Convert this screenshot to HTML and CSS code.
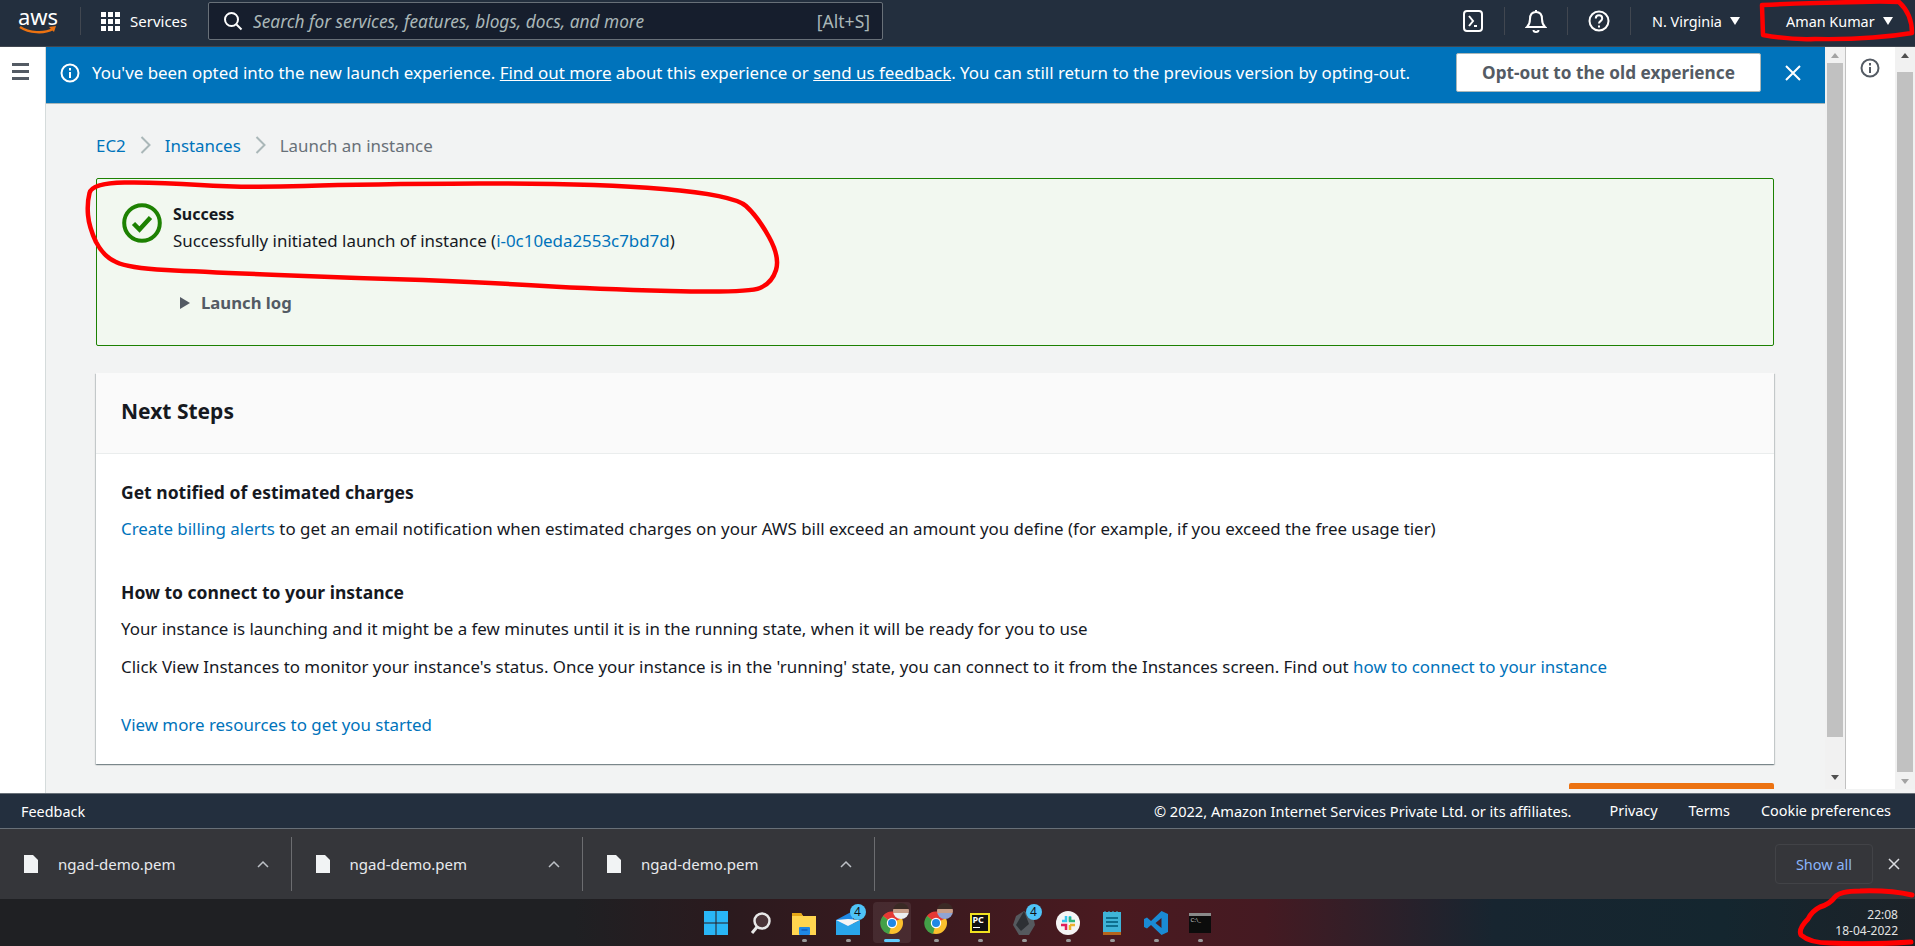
FILE: index.html
```html
<!DOCTYPE html>
<html lang="en">
<head>
<meta charset="UTF-8">
<meta name="viewport" content="width=device-width, initial-scale=1.0">
<title>Launch an instance | EC2</title>
<link rel="stylesheet" href="styles.css">
</head>
<body>

<header class="topbar">
  <div class="aws-logo">
    <span>aws</span>
    <svg width="40" height="10" viewBox="0 0 40 10"><path d="M2 1c9 6 24 7 33 2" fill="none" stroke="#ec7211" stroke-width="2.4"/><path d="M31 1l7-1-2 6z" fill="#ec7211"/></svg>
  </div>
  <div class="top-divider logo-divider"></div>
  <div class="services">
    <div class="grid-icon"><i></i><i></i><i></i><i></i><i></i><i></i><i></i><i></i><i></i></div>
    <span>Services</span>
  </div>
  <div class="search">
    <svg width="20" height="20" viewBox="0 0 20 20" fill="none" stroke="#fff" stroke-width="2"><circle cx="8.5" cy="8.5" r="6.5"/><path d="M13.5 13.5l5 5"/></svg>
    <span class="search-text">Search for services, features, blogs, docs, and more</span>
    <span class="search-key">[Alt+S]</span>
  </div>
  <div class="top-right">
    <div class="top-icon">
      <svg width="20" height="22" viewBox="0 0 20 22" fill="none" stroke="#fff" stroke-width="2"><rect x="1" y="1" width="18" height="20" rx="3"/><path d="M6 6l4 5-4 5M11 16h3"/></svg>
    </div>
    <div class="top-divider"></div>
    <div class="top-icon">
      <svg width="22" height="24" viewBox="0 0 22 24" fill="none" stroke="#fff" stroke-width="2"><path d="M2 18c3-3 3-5 3-8 0-4 2-7 6-7s6 3 6 7c0 3 0 5 3 8z"/><path d="M11 1v2M8.500 21a2.500 2 0 0 0 5 0"/></svg>
    </div>
    <div class="top-divider"></div>
    <div class="top-icon">
      <svg width="22" height="22" viewBox="0 0 22 22" fill="none" stroke="#fff" stroke-width="2"><circle cx="11" cy="11" r="9.500"/><path d="M7.800 8.500c0-4.200 6.400-4.200 6.400 0 0 2.600-3.200 2.600-3.200 5"/><path d="M11 15.500v2"/></svg>
    </div>
    <div class="top-divider"></div>
    <div class="top-menu region">N. Virginia <span class="arrow"></span></div>
    <div class="top-menu user">Aman Kumar <span class="arrow"></span></div>
  </div>
</header>

<div class="workspace">
  <aside class="side-left">
    <div class="hamburger"><i></i><i></i><i></i></div>
  </aside>

  <div class="center">
    <div class="banner">
      <svg class="banner-info" width="20" height="20" viewBox="0 0 20 20" fill="none" stroke="#fff" stroke-width="2"><circle cx="10" cy="10" r="8.500"/><path d="M10 9v6M10 5v2.400"/></svg>
      <p class="banner-text">You've been opted into the new launch experience. <a href="#">Find out more</a> about this experience or <a href="#">send us feedback</a>. You can still return to the previous version by opting-out.</p>
      <button class="opt-out">Opt-out to the old experience</button>
      <svg class="banner-close" width="18" height="18" viewBox="0 0 18 18" fill="none" stroke="#fff" stroke-width="2"><path d="M2 2l14 14M16 2L2 16"/></svg>
    </div>

    <main class="content">
      <nav class="crumbs">
        <a href="#">EC2</a>
        <svg width="11" height="18" viewBox="0 0 11 18" fill="none" stroke="#aab7b8" stroke-width="2"><path d="M1.500 1l8 8-8 8"/></svg>
        <a href="#">Instances</a>
        <svg width="11" height="18" viewBox="0 0 11 18" fill="none" stroke="#aab7b8" stroke-width="2"><path d="M1.500 1l8 8-8 8"/></svg>
        <span>Launch an instance</span>
      </nav>

      <section class="success-box">
        <div class="success-head">
          <svg width="40" height="40" viewBox="0 0 40 40" fill="none" stroke="#1d8102"><circle cx="20" cy="20" r="17.800" stroke-width="4"/><path d="M11.500 20.500l6 6 11-12" stroke-width="4.500"/></svg>
          <div>
            <div class="success-title">Success</div>
            <div class="success-msg">Successfully initiated launch of instance (<a href="#">i-0c10eda2553c7bd7d</a>)</div>
          </div>
        </div>
        <div class="launch-log"><span class="caret-right"></span>Launch log</div>
      </section>

      <section class="card">
        <h2 class="card-title">Next Steps</h2>
        <div class="card-body">
          <h3>Get notified of estimated charges</h3>
          <p><a href="#">Create billing alerts</a> to get an email notification when estimated charges on your AWS bill exceed an amount you define (for example, if you exceed the free usage tier)</p>
          <h3 class="second">How to connect to your instance</h3>
          <p>Your instance is launching and it might be a few minutes until it is in the running state, when it will be ready for you to use</p>
          <p>Click View Instances to monitor your instance's status. Once your instance is in the 'running' state, you can connect to it from the Instances screen. Find out <a href="#">how to connect to your instance</a></p>
          <p class="more"><a href="#">View more resources to get you started</a></p>
        </div>
      </section>

      <div class="orange-btn"></div>
    </main>
  </div>

  <div class="scrollbar">
    <span class="sb-up"></span>
    <div class="sb-thumb thumb-main"></div>
    <span class="sb-down"></span>
  </div>

  <aside class="side-right">
    <svg width="20" height="20" viewBox="0 0 20 20" fill="none" stroke="#545b64" stroke-width="2"><circle cx="10" cy="10" r="8.500"/><path d="M10 9v6M10 5v2.400"/></svg>
  </aside>

  <div class="scrollbar">
    <span class="sb-up dark"></span>
    <div class="sb-thumb thumb-side"></div>
    <span class="sb-down light"></span>
  </div>
</div>

<footer class="console-footer">
  <a href="#">Feedback</a>
  <div class="footer-right">
    <span class="copyright">© 2022, Amazon Internet Services Private Ltd. or its affiliates.</span>
    <a href="#">Privacy</a>
    <a href="#">Terms</a>
    <a href="#">Cookie preferences</a>
  </div>
</footer>

<div class="downloads">
  <div class="dl-item">
    <svg width="14" height="18" viewBox="0 0 14 18"><path d="M0 0h9l5 5v13H0z" fill="#f1f3f4"/></svg>
    <span>ngad-demo.pem</span>
    <svg class="dl-caret" width="12" height="8" viewBox="0 0 12 8" fill="none" stroke="#bdc1c6" stroke-width="1.500"><path d="M1 7l5-5 5 5"/></svg>
  </div>
  <div class="dl-item">
    <svg width="14" height="18" viewBox="0 0 14 18"><path d="M0 0h9l5 5v13H0z" fill="#f1f3f4"/></svg>
    <span>ngad-demo.pem</span>
    <svg class="dl-caret" width="12" height="8" viewBox="0 0 12 8" fill="none" stroke="#bdc1c6" stroke-width="1.500"><path d="M1 7l5-5 5 5"/></svg>
  </div>
  <div class="dl-item">
    <svg width="14" height="18" viewBox="0 0 14 18"><path d="M0 0h9l5 5v13H0z" fill="#f1f3f4"/></svg>
    <span>ngad-demo.pem</span>
    <svg class="dl-caret" width="12" height="8" viewBox="0 0 12 8" fill="none" stroke="#bdc1c6" stroke-width="1.500"><path d="M1 7l5-5 5 5"/></svg>
  </div>
  <button class="show-all">Show all</button>
  <svg class="dl-close" width="12" height="12" viewBox="0 0 12 12" fill="none" stroke="#dadce0" stroke-width="1.500"><path d="M1 1l10 10M11 1L1 11"/></svg>
</div>

<div class="taskbar">
  <div></div>
  <div class="tb-icons">
    <div class="tb-icon">
      <svg width="24" height="24" viewBox="0 0 24 24"><path d="M0 0h11.500v11.500H0zM12.500 0H24v11.500H12.500zM0 12.500h11.500V24H0zM12.500 12.500H24V24H12.500z" fill="#29b6f6"/></svg>
    </div>
    <div class="tb-icon">
      <svg width="24" height="24" viewBox="0 0 24 24"><circle cx="14" cy="10" r="7.500" fill="#4a3438" stroke="#e8e8e8" stroke-width="2.500"/><path d="M9 16l-5 6" stroke="#e8e8e8" stroke-width="3"/></svg>
    </div>
    <div class="tb-icon dot">
      <svg width="24" height="24" viewBox="0 0 24 24"><path d="M0 2h9l2 3h13v19H0z" fill="#ffd54f"/><path d="M0 2h9l2 3H0z" fill="#e6a817"/><rect x="7" y="16" width="11" height="8" rx="1" fill="#1e88e5"/><path d="M9.500 19h6" stroke="#0d47a1"/></svg>
    </div>
    <div class="tb-icon dot">
      <svg width="24" height="24" viewBox="0 0 24 24"><path d="M0 9L17 0v20H0z" fill="#1e88e5"/><path d="M0 9l12 6 12-6v15H0z" fill="#29a5ea"/><path d="M0 9l12-1 12 1-12 6z" fill="#f5f5f5"/></svg>
      <span class="tb-badge">4</span>
    </div>
    <div class="tb-icon dot active">
      <div class="active-bg"></div>
      <svg class="chrome" width="24" height="24" viewBox="0 0 24 24"><circle cx="12" cy="12" r="11" fill="#fbc02d"/><path d="M12 12L3 5a11 11 0 0 1 19 2z" fill="#e53935"/><path d="M12 12L3 5a11 11 0 0 0 6 18z" fill="#43a047"/><circle cx="12" cy="12" r="5.200" fill="#fff"/><circle cx="12" cy="12" r="4" fill="#1e88e5"/></svg>
      <span class="tb-avatar"></span>
    </div>
    <div class="tb-icon dot">
      <svg class="chrome" width="24" height="24" viewBox="0 0 24 24"><circle cx="12" cy="12" r="11" fill="#fbc02d"/><path d="M12 12L3 5a11 11 0 0 1 19 2z" fill="#e53935"/><path d="M12 12L3 5a11 11 0 0 0 6 18z" fill="#43a047"/><circle cx="12" cy="12" r="5.200" fill="#fff"/><circle cx="12" cy="12" r="4" fill="#1e88e5"/></svg>
      <span class="tb-avatar second"></span>
    </div>
    <div class="tb-icon dot">
      <div class="pycharm">PC<i></i></div>
    </div>
    <div class="tb-icon dot">
      <svg width="22" height="24" viewBox="0 0 22 24"><path d="M11 0l9 5 2 9-6 10H6L0 14 3 5z" fill="#55595e"/><path d="M11 0l-8 14 5 6 8-7z" fill="#2d3034"/></svg>
      <span class="tb-badge">4</span>
    </div>
    <div class="tb-icon dot">
      <svg width="24" height="24" viewBox="0 0 24 24"><circle cx="12" cy="12" r="12" fill="#f5f5f5"/><path d="M10 5v5H6M14 5v5" stroke="#36c5f0" stroke-width="2.500" fill="none"/><path d="M14 6v4h5" stroke="#2eb67d" stroke-width="2.500" fill="none"/><path d="M14 14h5M14 14v5" stroke="#ecb22e" stroke-width="2.500" fill="none"/><path d="M5 14h5v5" stroke="#e01e5a" stroke-width="2.500" fill="none"/></svg>
    </div>
    <div class="tb-icon dot">
      <svg width="18" height="24" viewBox="0 0 18 24"><rect y="1" width="18" height="23" fill="#3fb4d8"/><rect y="21" width="18" height="3" fill="#b5651d"/><path d="M3 7h12M3 11h12M3 15h12" stroke="#0e6f8f" stroke-width="1.800"/><path d="M2 0v3M6 0v3M10 0v3M14 0v3" stroke="#3fb4d8"/></svg>
    </div>
    <div class="tb-icon dot">
      <svg width="24" height="24" viewBox="0 0 24 24"><path d="M17.500 0L24 3v18l-6.500 3L7 14l-4 3.500L0 16v-8l3-1.500 4 3.500zM17.500 7L11.500 12l6 5z" fill="#1a8ad4"/></svg>
    </div>
    <div class="tb-icon dot">
      <div class="cmd">C:\_<i></i></div>
    </div>
  </div>
  <div class="clock">
    <div>22:08</div>
    <div>18-04-2022</div>
  </div>
</div>

<svg class="marks" width="1915" height="946" viewBox="0 0 1915 946" fill="none" stroke="#f00" stroke-width="4.500" stroke-linejoin="round" stroke-linecap="round">
  <path d="M1762 5L1763 35Q1790 40 1815 39Q1870 40 1912 33Q1912 14 1899 2Q1880 1 1860 2Q1800 3 1762 5Z"/>
  <path d="M88 215Q87 203 89.500 193Q92 183 124.500 182.500Q157 182 200 185Q244 188 304 186Q365 184 479 183.500Q593 183 663 189Q734 195 746 206Q758 217 769 237Q780 257 776 270Q772 283 760 288Q748 293 670 291Q593 289 544 286Q496 283 423 280Q351 278 278 275Q205 272 166 270Q128 268 116 262Q104 257 96 242Q89 227 88 215Z"/>
  <path d="M1912 895Q1890 890 1860 891Q1840 891 1835 897Q1830 904 1820 907Q1812 911 1808 919Q1798 929 1801 935Q1810 943 1830 943Q1870 945 1911 942" stroke-width="5"/>
</svg>

</body>
</html>
```

FILE: styles.css
```css
* {
  box-sizing: border-box;
}
html, body {
  margin: 0;
  height: 946px;
  overflow: hidden;
}
body {
  display: flex;
  flex-direction: column;
  position: relative;
  font-family: "Noto Sans", Arial, sans-serif;
  font-size: 16.9px;
  color: #16191f;
  background-color: #f2f3f3;
}
a {
  color: #0073bb;
  text-decoration: none;
}
p, h2, h3 {
  margin: 0;
}

/* top bar */
.topbar {
  height: 47px;
  flex: none;
  display: flex;
  align-items: center;
  padding-bottom: 4px;
  background-color: #232f3e;
  border-bottom: 1px solid #414750;
  color: white;
  font-size: 14.4px;
}
.aws-logo {
  width: 40px;
  margin-left: 18px;
  display: flex;
  flex-direction: column;
  align-items: center;
  font-size: 22px;
  line-height: 18px;
}
.aws-logo svg {
  margin-top: 1px;
}
.top-divider {
  width: 1px;
  height: 28px;
  background-color: #414750;
}
.logo-divider {
  margin-left: 22px;
}
.services {
  display: flex;
  align-items: center;
  gap: 10px;
  margin-left: 20px;
  width: 107px;
  font-size: 15px;
}
.grid-icon {
  display: grid;
  grid-template-columns: repeat(3, 5px);
  grid-auto-rows: 5px;
  gap: 2px;
}
.grid-icon i {
  background-color: white;
}
.search {
  width: 675px;
  height: 38px;
  display: flex;
  align-items: center;
  padding: 0 12px 0 14px;
  background-color: #161e2d;
  border: 1px solid #687078;
  border-radius: 2px;
}
.search-text {
  margin-left: 10px;
  flex: 1;
  font-style: italic;
  color: #aab7b8;
  font-size: 17.3px;
}
.search-key {
  color: #aab7b8;
  font-size: 17.5px;
}
.top-right {
  margin-left: auto;
  display: flex;
  align-items: center;
}
.top-icon {
  width: 62px;
  display: flex;
  justify-content: center;
}
.top-menu {
  display: flex;
  align-items: center;
  gap: 8px;
}
.region {
  margin-left: 21px;
  width: 134px;
}
.user {
  width: 129px;
}
.arrow {
  width: 0;
  height: 0;
  border-left: 5px solid transparent;
  border-right: 5px solid transparent;
  border-top: 8px solid white;
}

/* middle */
.workspace {
  flex: 1;
  min-height: 0;
  display: flex;
}
.side-left {
  width: 46px;
  flex: none;
  background-color: white;
  border-right: 1px solid #d5dbdb;
  padding: 16px 16px 0 12px;
}
.hamburger {
  display: flex;
  flex-direction: column;
  gap: 4px;
}
.hamburger i {
  height: 3px;
  background-color: #545b64;
}
.center {
  flex: 1;
  min-width: 0;
  display: flex;
  flex-direction: column;
}
.banner {
  height: 57px;
  flex: none;
  display: flex;
  align-items: center;
  padding: 0 23px 5px 14px;
  background-color: #0073bb;
  border-bottom: 1px solid #aab7b8;
  color: white;
}
.banner-text {
  margin-left: 12px;
  flex: 1;
}
.banner-text a {
  color: white;
  text-decoration: underline;
}
.opt-out {
  width: 305px;
  height: 39px;
  background-color: white;
  border: 1px solid #aab7b8;
  border-radius: 2px;
  color: #545b64;
  font-family: inherit;
  font-size: 17.2px;
  font-weight: bold;
}
.banner-close {
  margin-left: 23px;
}
.content {
  flex: 1;
  min-height: 0;
  overflow: hidden;
  padding: 29px 51px 0 50px;
  border-bottom: 4px solid #f2f3f3;
}
.crumbs {
  display: flex;
  align-items: center;
  gap: 14px;
  height: 24px;
  color: #687078;
}
.success-box {
  margin-top: 21px;
  height: 168px;
  padding: 24px 0 0 25px;
  background-color: #f2f8f0;
  border: 1px solid #1d8102;
  border-radius: 2px;
}
.success-head {
  display: flex;
  gap: 11px;
}
.success-title {
  font-size: 16px;
  font-weight: bold;
  line-height: 24px;
  margin-top: -1px;
}
.success-msg {
  line-height: 24px;
  margin-top: 3px;
}
.launch-log {
  display: flex;
  align-items: center;
  gap: 11px;
  margin: 38px 0 0 58px;
  font-weight: bold;
  font-size: 16.7px;
  color: #545b64;
}
.caret-right {
  width: 0;
  height: 0;
  border-top: 6px solid transparent;
  border-bottom: 6px solid transparent;
  border-left: 10px solid #545b64;
}
.card {
  margin-top: 27px;
  background-color: white;
  box-shadow: 0 1px 1px rgba(0, 28, 36, 0.3), 1px 1px 1px rgba(0, 28, 36, 0.15), -1px 1px 1px rgba(0, 28, 36, 0.15);
}
.card-title {
  height: 81px;
  padding: 22px 25px 0;
  background-color: #fafafa;
  border-bottom: 1px solid #eaeded;
  font-size: 21px;
  line-height: 32px;
}
.card-body {
  padding: 25px 25px 26px;
  line-height: 26px;
}
.card-body h3 {
  font-size: 17.5px;
}
.card-body p {
  margin-top: 11px;
}
.card-body p + p {
  margin-top: 12px;
}
.card-body .second {
  margin-top: 37px;
}
.card-body .more {
  margin-top: 32px;
}
.orange-btn {
  width: 205px;
  height: 6px;
  margin: 19px 0 0 auto;
  background-color: #ec7211;
  border-radius: 2px 2px 0 0;
}

/* scrollbars */
.scrollbar {
  width: 20px;
  flex: none;
  position: relative;
  margin-bottom: 4px;
  background-color: #f1f1f1;
}
.sb-thumb {
  margin: 16px 2px 0;
  background-color: #c1c1c1;
}
.thumb-main {
  height: 674px;
}
.thumb-side {
  height: 700px;
  margin-top: 25px;
}
.sb-up, .sb-down {
  position: absolute;
  left: 6px;
  width: 0;
  height: 0;
  border-left: 4px solid transparent;
  border-right: 4px solid transparent;
}
.sb-up {
  top: 6px;
  border-bottom: 5px solid #a3a3a3;
}
.sb-up.dark {
  border-bottom-color: #505050;
}
.sb-down {
  bottom: 9px;
  border-top: 5px solid #505050;
}
.sb-down.light {
  bottom: 5px;
  border-top-color: #a3a3a3;
}
.side-right {
  width: 50px;
  flex: none;
  background-color: white;
  border-left: 1px solid #c1c1c1;
  padding: 11px 0 0 14px;
  margin-bottom: 4px;
}

/* footer */
.console-footer {
  height: 36px;
  flex: none;
  display: flex;
  align-items: center;
  justify-content: space-between;
  padding: 0 24px 0 21px;
  background-color: #232f3e;
  border-top: 1px solid #687078;
  border-bottom: 1px solid #687078;
  font-size: 14.4px;
}
.console-footer, .console-footer a {
  color: white;
}
.footer-right {
  display: flex;
  gap: 31px;
}
.copyright {
  margin-right: 7px;
  font-size: 14.6px;
}

/* chrome downloads */
.downloads {
  height: 70px;
  flex: none;
  display: flex;
  align-items: center;
  background-color: #35363a;
  color: #e8eaed;
  font-size: 15px;
}
.dl-item {
  width: 291.5px;
  height: 54px;
  display: flex;
  align-items: center;
  padding: 0 22px 0 24px;
  border-right: 1px solid #6c6d70;
}
.dl-item span {
  margin-left: 20px;
  flex: 1;
}
.show-all {
  margin-left: auto;
  width: 98px;
  height: 40px;
  background-color: transparent;
  border: 1px solid #424347;
  border-radius: 4px;
  color: #8ab4f8;
  font-family: inherit;
  font-size: 14.5px;
}
.dl-close {
  margin: 0 15px;
}

/* windows taskbar */
.taskbar {
  height: 47px;
  flex: none;
  display: grid;
  grid-template-columns: 1fr auto 1fr;
  align-items: center;
  background: linear-gradient(90deg, #1f2023 0%, #1f2023 30%, #2b1a1e 38%, #4a1a20 58%, #451a22 66%, #172530 78%, #14262f 90%, #1c2228 100%);
}
.tb-icons {
  display: flex;
}
.tb-icon {
  width: 44px;
  height: 47px;
  display: flex;
  align-items: center;
  justify-content: center;
  position: relative;
}
.dot::after {
  content: "";
  position: absolute;
  bottom: 4px;
  left: 20px;
  width: 5px;
  height: 3px;
  border-radius: 2px;
  background-color: #9a9a9a;
}
.active-bg {
  position: absolute;
  top: 3px;
  left: 3px;
  width: 38px;
  height: 41px;
  border-radius: 4px;
  background-color: rgba(255, 255, 255, 0.08);
}
.active::after {
  left: 14px;
  width: 16px;
  background-color: #60cdff;
}
.tb-badge {
  position: absolute;
  top: 5px;
  right: 4px;
  width: 16px;
  height: 16px;
  border-radius: 50%;
  background-color: #4fc3f7;
  color: #111;
  font-size: 12px;
  line-height: 16px;
  text-align: center;
}
.chrome {
  position: relative;
}
.tb-avatar {
  position: absolute;
  top: 4px;
  right: 5px;
  width: 16px;
  height: 16px;
  border-radius: 50%;
  background: linear-gradient(180deg, #3a2a25 0 35%, #c9a08a 35% 60%, #eceff1 60%);
}
.tb-avatar.second {
  background: linear-gradient(180deg, #3a2a25 0 35%, #c9a08a 35% 60%, #90a4d4 60%);
}
.pycharm {
  width: 20px;
  height: 20px;
  background-color: #111;
  border: 2px solid #f0e020;
  color: white;
  font-size: 9px;
  font-weight: bold;
  line-height: 10px;
  padding-left: 1px;
}
.pycharm i {
  display: block;
  width: 7px;
  height: 1px;
  margin-top: 2px;
  background-color: white;
}
.cmd {
  width: 22px;
  height: 20px;
  background-color: #0c0c0c;
  border-top: 3px solid #8a8a8a;
  color: #ccc;
  font-size: 6px;
  line-height: 8px;
  padding-left: 2px;
}
.clock {
  justify-self: end;
  padding-right: 17px;
  color: #e3e3e3;
  font-size: 12px;
  line-height: 16px;
  text-align: right;
}

/* red pen marks drawn over the screenshot */
.marks {
  position: absolute;
  top: 0;
  left: 0;
  pointer-events: none;
}
```
